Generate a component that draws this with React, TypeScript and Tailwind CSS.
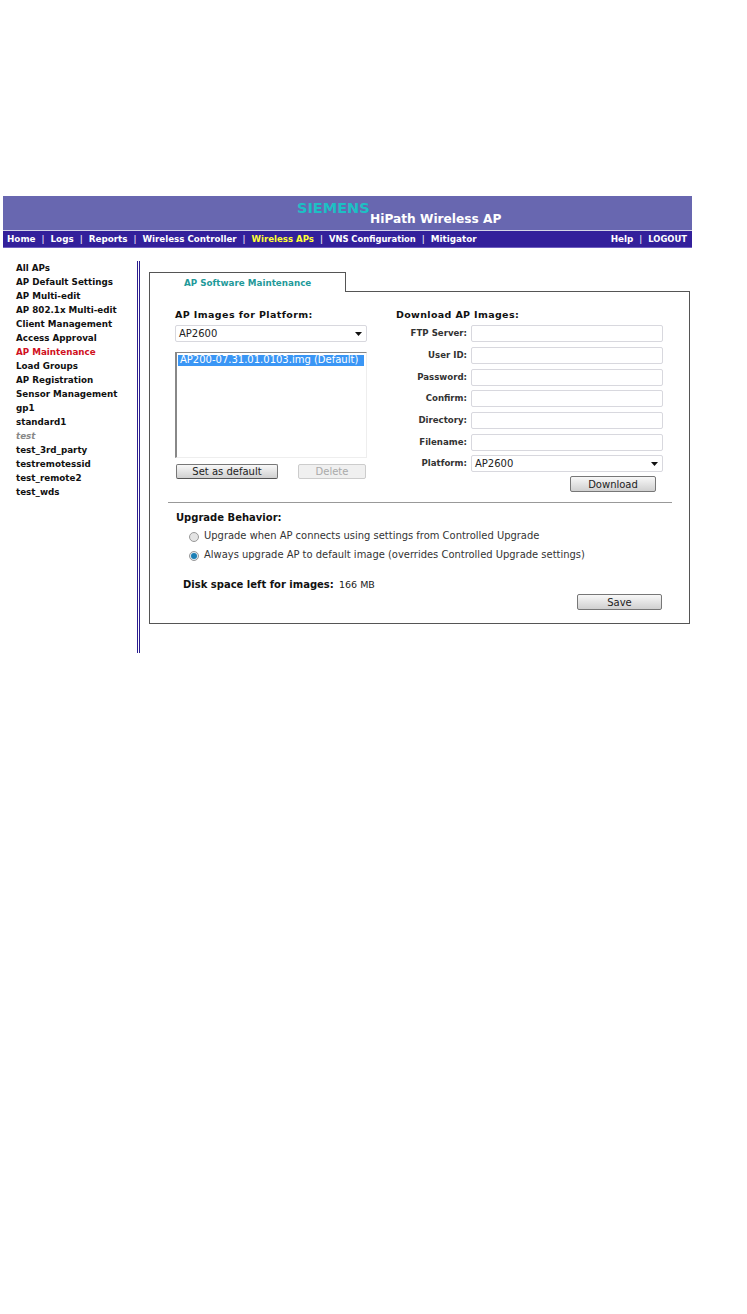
import React from 'react';

const sideLinks = [
  'All APs',
  'AP Default Settings',
  'AP Multi-edit',
  'AP 802.1x Multi-edit',
  'Client Management',
  'Access Approval',
  'AP Maintenance',
  'Load Groups',
  'AP Registration',
  'Sensor Management',
  'gp1',
  'standard1',
  'test',
  'test_3rd_party',
  'testremotessid',
  'test_remote2',
  'test_wds',
];

const navLeft = [
  { label: 'Home', className: '' },
  { label: 'Logs', className: '' },
  { label: 'Reports', className: '' },
  { label: 'Wireless Controller', className: 'text-[8.7px]' },
  { label: 'Wireless APs', className: 'text-[8.6px] text-[#ffff33]' },
  { label: 'VNS Configuration', className: 'text-[8.4px]' },
  { label: 'Mitigator', className: '' },
];
const formFields = [
  { label: 'FTP Server:', gap: 'mt-0' },
  { label: 'User ID:', gap: 'mt-[5px]' },
  { label: 'Password:', gap: 'mt-[5px]' },
  { label: 'Confirm:', gap: 'mt-[4px]' },
  { label: 'Directory:', gap: 'mt-[5px]' },
  { label: 'Filename:', gap: 'mt-[5px]' },
];

const Sep = () => <span className="mx-[6px] font-normal text-white">|</span>;

const Arrow = () => (
  <svg width="7" height="4" viewBox="0 0 7 4" className="shrink-0">
    <path d="M0 0h7L3.5 4z" fill="#111" />
  </svg>
);

const SelectBox = ({ className }: { className: string }) => (
  <div
    className={`flex h-[17px] items-center justify-between rounded-[2px] border border-[#d8d8de] pl-[3px] pr-[4px] text-[10px] text-[#222] ${className}`}
  >
    <span>AP2600</span>
    <Arrow />
  </div>
);

const Btn = ({ label, className }: { label: string; className: string }) => (
  <div
    className={`flex items-center justify-center rounded-[2px] border border-[#777] bg-gradient-to-b from-[#f8f8f8] to-[#d0d0d0] text-[10px] text-[#222] ${className}`}
  >
    {label}
  </div>
);

const Radio = ({ checked, label }: { checked?: boolean; label: string }) => (
  <div className="flex h-[19px] items-center gap-[5px] pl-[14px] text-[9.95px] text-[#333]">
    <span
      className={`flex h-[10px] w-[10px] items-center justify-center rounded-full border border-[#999] ${checked ? 'bg-[#dfe8f0]' : 'bg-[#e4e4e4]'}`}
    >
      {checked && <span className="h-[6px] w-[6px] rounded-full bg-[#1b7fb5]" />}
    </span>
    <span>{label}</span>
  </div>
);

export default function App() {
  return (
    <div className="h-[1314px] w-[747px] bg-white pl-[3px] pt-[196px] font-['DejaVu_Sans',sans-serif]">
      <div className="w-[689px]">
        <div className="h-[34px] bg-[#6867b0] pl-[294px]">
          <div className="relative h-full w-[220px]">
            <span className="absolute left-0 top-[4px] text-[14.5px] font-bold leading-[17px] text-[#1dbfc4]">SIEMENS</span>
            <span className="absolute left-[73px] top-[15px] whitespace-nowrap text-[12.2px] font-bold leading-[16px] text-white">HiPath Wireless AP</span>
          </div>
        </div>
        <div className="flex h-[18px] items-center justify-between border-t border-[#d5d5e8] border-b-[#6f5fc0] border-b bg-[#33209b] pl-[4px] pr-[5px] pt-[1px] text-[8.8px] leading-[13px] font-bold text-white">
          <div className="flex items-baseline">
            {navLeft.map((item, i) => (
              <React.Fragment key={item.label}>
                {i > 0 && <Sep />}
                <span className={item.className}>{item.label}</span>
              </React.Fragment>
            ))}
          </div>
          <div className="flex items-baseline">
            <span>Help</span>
            <Sep />
            <span className="text-[8.4px]">LOGOUT</span>
          </div>
        </div>
      </div>

      <div className="flex">
        <div className="w-[134px] pl-[13px] pt-[13px] text-[8.75px] font-bold leading-[14px] text-[#111]">
          {sideLinks.map((link) => (
            <div
              key={link}
              className={link === 'AP Maintenance' ? 'text-[#d01020]' : link === 'test' ? 'italic text-[#888]' : ''}
            >
              {link}
            </div>
          ))}
        </div>

        <div className="mt-[13px] h-[392px] w-[3px] border-x border-x-[#2c1f8f]" />

        <div className="ml-[9px] mt-[24px] w-[541px]">
          <div className="relative z-10 flex h-[20px] w-[197px] items-center border border-b-0 border-[#555] bg-white pl-[34px] pt-[2px] text-[8.75px] font-bold text-[#1f9a9a]">
            AP Software Maintenance
          </div>
          <div className="-mt-[1px] h-[333px] border border-[#555] px-[18px] pt-[17px]">
            <div className="flex h-[193px]">
              <div className="ml-[7px] w-[192px]">
                <div className="text-[9.5px] font-bold leading-[12px] tracking-[0.4px] text-[#111]">AP Images for Platform:</div>
                <SelectBox className="mt-[4px] w-[192px]" />
                <div className="mt-[10px] h-[106px] border-[#888] border-l-2 border-t border-r border-r-[#eee] border-b border-b-[#eee] pl-[1px] pr-[2px] pt-[2px]">
                  <div className="h-[11px] bg-[#3a96f5] pl-[2px] text-[10px] leading-[10px] text-white">
                    AP200-07.31.01.0103.img (Default)
                  </div>
                </div>
                <div className="mt-[6px] flex justify-between pl-[1px] pr-[1px]">
                  <Btn label="Set as default" className="h-[15px] w-[102px] border-b-[#555]" />
                  <div className="flex h-[15px] w-[68px] items-center justify-center rounded-[2px] border border-[#ccc] bg-[#f0f0f0] text-[10px] text-[#aaa]">
                    Delete
                  </div>
                </div>
              </div>

              <div className="ml-[29px] w-[267px]">
                <div className="text-[9.5px] font-bold leading-[12px] tracking-[0.35px] text-[#111]">Download AP Images:</div>
                <div className="mt-[4px] flex flex-col">
                  {formFields.map((f) => (
                    <div key={f.label} className={`flex items-center justify-end gap-[4px] ${f.gap}`}>
                      <span className="text-[8.6px] font-bold text-[#333]">{f.label}</span>
                      <div className="h-[17px] w-[192px] rounded-[2px] border border-[#d8d8de] bg-white" />
                    </div>
                  ))}
                  <div className="mt-[4px] flex items-center justify-end gap-[4px]">
                    <span className="text-[8.6px] font-bold text-[#333]">Platform:</span>
                    <SelectBox className="w-[192px]" />
                  </div>
                </div>
                <div className="mt-[4px] flex justify-end pr-[7px]">
                  <Btn label="Download" className="h-[16px] w-[86px]" />
                </div>
              </div>
            </div>

            <div className="w-[504px] border-t border-[#999]" />

            <div className="pl-[7px] pt-[9px]">
              <div className="pl-[1px] text-[10px] font-bold leading-[12px] text-[#111]">Upgrade Behavior:</div>
              <div className="mt-[3px]">
                <Radio label="Upgrade when AP connects using settings from Controlled Upgrade" />
                <Radio checked label="Always upgrade AP to default image (overrides Controlled Upgrade settings)" />
              </div>
              <div className="mt-[14px] pl-[8px] text-[10px] leading-[12px] text-[#222]">
                <span className="font-bold text-[#111]">Disk space left for images:</span> <span className="ml-[2px] text-[9.5px]">166 MB</span>
              </div>
              <div className="mt-[3px] flex justify-end pr-[9px]">
                <Btn label="Save" className="h-[16px] w-[85px]" />
              </div>
            </div>
          </div>
        </div>
      </div>
    </div>
  );
}
